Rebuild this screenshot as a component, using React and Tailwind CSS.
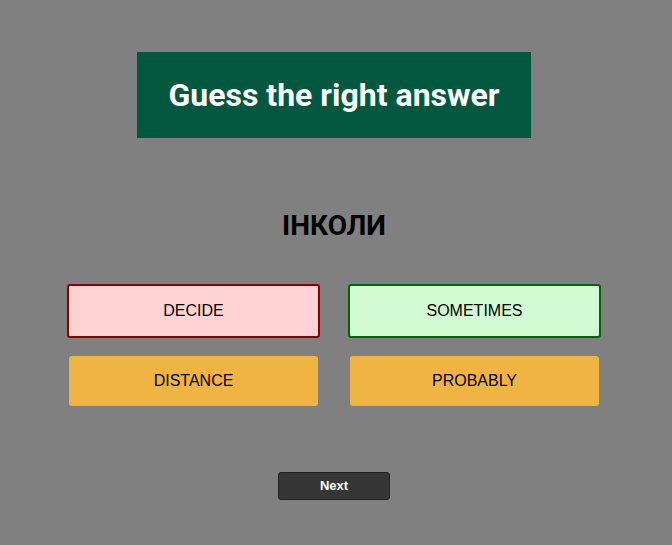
export default function App() {
  const opts = [
    { t: "DECIDE", cls: "border-2 border-[#8b0000] bg-[#ffd3d3]" },
    { t: "SOMETIMES", cls: "border-2 border-[#006400] bg-[#d3fbd3]" },
    { t: "DISTANCE", cls: "m-[2px] bg-[#f0b442]" },
    { t: "PROBABLY", cls: "m-[2px] bg-[#f0b442]" },
  ];
  return (
    <div className="min-h-screen w-full bg-[#808080]">
      <div className="w-[668px] flex flex-col items-center pt-[52px]">
        <div className="w-[394px] h-[86px] bg-[#02573f] flex items-center justify-center">
          <h1 className="text-white text-[32px] font-bold font-['Roboto',sans-serif] leading-none">
            Guess the right answer
          </h1>
        </div>
        <div className="mt-[71px] text-[28px] leading-[34px] font-bold font-['Roboto',sans-serif] text-black">
          ІНКОЛИ
        </div>
        <div className="mt-[41px] grid grid-cols-[253px_253px] gap-x-[28px] gap-y-[16px]">
          {opts.map((o) => (
            <div key={o.t} className="h-[54px] flex">
              <button
                className={`flex-1 rounded-[3px] flex items-center justify-center text-[16px] text-black font-['Liberation_Sans',Arial,sans-serif] ${o.cls}`}
              >
                {o.t}
              </button>
            </div>
          ))}
        </div>
        <button className="mt-[64px] w-[112px] h-[28px] rounded-[3px] bg-[#363636] border border-[#222] text-white text-[13px] font-bold font-['Liberation_Sans',Arial,sans-serif] flex items-center justify-center">
          Next
        </button>
      </div>
    </div>
  );
}
